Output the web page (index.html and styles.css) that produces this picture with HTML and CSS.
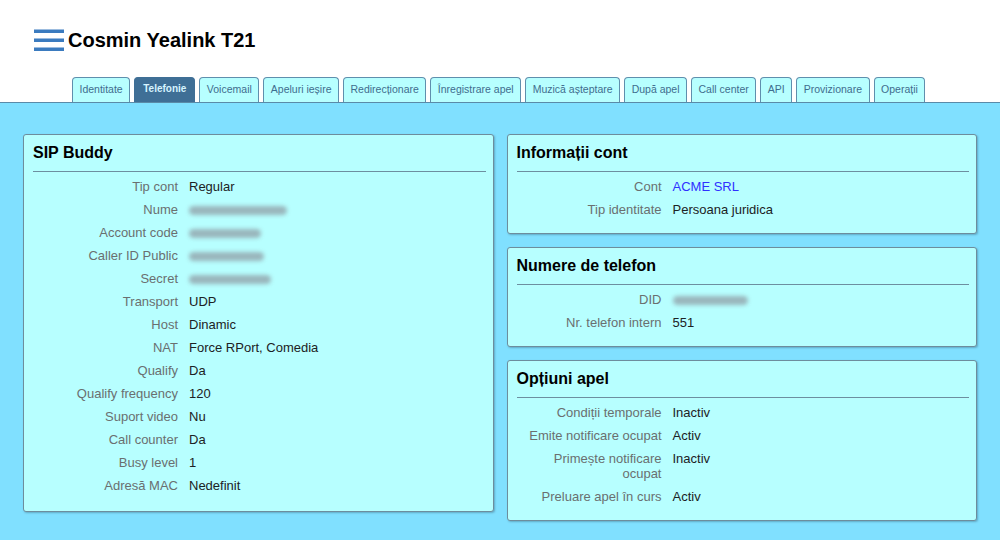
FILE: index.html
```html
<!DOCTYPE html>
<html lang="ro">
<head>
<meta charset="utf-8">
<title>Cosmin Yealink T21</title>
<link rel="stylesheet" href="styles.css">
</head>
<body>
<header class="header">
  <div class="title-row">
    <svg class="burger" width="30" height="23" viewBox="0 0 30 23">
      <rect x="0" y="0.5" width="30" height="3.5" fill="#3b7bbf"/>
      <rect x="0" y="9.5" width="30" height="3.5" fill="#3b7bbf"/>
      <rect x="0" y="18.5" width="30" height="3.5" fill="#3b7bbf"/>
    </svg>
    <h1 class="title">Cosmin Yealink T21</h1>
  </div>
  <nav class="tabs">
    <a class="tab">Identitate</a>
    <a class="tab active">Telefonie</a>
    <a class="tab">Voicemail</a>
    <a class="tab">Apeluri ieșire</a>
    <a class="tab">Redirecționare</a>
    <a class="tab">Înregistrare apel</a>
    <a class="tab">Muzică așteptare</a>
    <a class="tab">După apel</a>
    <a class="tab">Call center</a>
    <a class="tab">API</a>
    <a class="tab">Provizionare</a>
    <a class="tab">Operații</a>
  </nav>
</header>
<main class="main">
  <div class="col">
    <section class="panel panel-tall">
      <h2 class="panel-title">SIP Buddy</h2>
      <div class="rows">
        <div class="row"><span class="lbl">Tip cont</span><span class="val">Regular</span></div>
        <div class="row"><span class="lbl">Nume</span><span class="val"><span class="blur w98"></span></span></div>
        <div class="row"><span class="lbl">Account code</span><span class="val"><span class="blur w72"></span></span></div>
        <div class="row"><span class="lbl">Caller ID Public</span><span class="val"><span class="blur w75"></span></span></div>
        <div class="row"><span class="lbl">Secret</span><span class="val"><span class="blur w82"></span></span></div>
        <div class="row"><span class="lbl">Transport</span><span class="val">UDP</span></div>
        <div class="row"><span class="lbl">Host</span><span class="val">Dinamic</span></div>
        <div class="row"><span class="lbl">NAT</span><span class="val">Force RPort, Comedia</span></div>
        <div class="row"><span class="lbl">Qualify</span><span class="val">Da</span></div>
        <div class="row"><span class="lbl">Qualify frequency</span><span class="val">120</span></div>
        <div class="row"><span class="lbl">Suport video</span><span class="val">Nu</span></div>
        <div class="row"><span class="lbl">Call counter</span><span class="val">Da</span></div>
        <div class="row"><span class="lbl">Busy level</span><span class="val">1</span></div>
        <div class="row"><span class="lbl">Adresă MAC</span><span class="val">Nedefinit</span></div>
      </div>
    </section>
  </div>
  <div class="col">
    <section class="panel">
      <h2 class="panel-title">Informații cont</h2>
      <div class="rows">
        <div class="row"><span class="lbl">Cont</span><span class="val"><a class="link">ACME SRL</a></span></div>
        <div class="row"><span class="lbl">Tip identitate</span><span class="val">Persoana juridica</span></div>
      </div>
    </section>
    <section class="panel">
      <h2 class="panel-title">Numere de telefon</h2>
      <div class="rows">
        <div class="row"><span class="lbl">DID</span><span class="val"><span class="blur w75"></span></span></div>
        <div class="row"><span class="lbl">Nr. telefon intern</span><span class="val">551</span></div>
      </div>
    </section>
    <section class="panel">
      <h2 class="panel-title">Opțiuni apel</h2>
      <div class="rows">
        <div class="row"><span class="lbl">Condiții temporale</span><span class="val">Inactiv</span></div>
        <div class="row"><span class="lbl">Emite notificare ocupat</span><span class="val">Activ</span></div>
        <div class="row"><span class="lbl">Primește notificare ocupat</span><span class="val">Inactiv</span></div>
        <div class="row"><span class="lbl">Preluare apel în curs</span><span class="val">Activ</span></div>
      </div>
    </section>
  </div>
</main>
</body>
</html>
```

FILE: styles.css
```css
* { box-sizing: border-box; }
html, body { margin: 0; padding: 0; }
body {
  width: 1000px;
  height: 540px;
  overflow: hidden;
  font-family: "Liberation Sans", Arial, sans-serif;
  background: #80e0ff;
}
.header {
  background: #ffffff;
  height: 102px;
  display: flex;
  flex-direction: column;
}
.title-row {
  display: flex;
  align-items: center;
  padding: 29px 0 0 34px;
  height: 51px;
}
.burger { display: block; margin-right: 4px; }
.title {
  margin: 0;
  font-size: 20px;
  font-weight: bold;
  color: #000;
  line-height: 22px;
}
.tabs {
  margin-top: auto;
  display: flex;
  gap: 4px;
  padding-left: 72px;
}
.tab {
  display: block;
  height: 25px;
  line-height: 22px;
  padding: 0 6.5px;
  font-size: 10.5px;
  color: #3f6d8e;
  background: #b7ffff;
  border: 1px solid #5f8fad;
  border-bottom: none;
  border-radius: 4px 4px 0 0;
}
.tab.active {
  background: #3f6f96;
  color: #d6f4ff;
  border-color: #3f6f96;
  font-weight: bold;
  font-size: 10px;
  padding: 0 8px;
}
.main {
  border-top: 1px solid #5a8aa8;
  display: flex;
  gap: 13px;
  padding: 31px 23px 0 23px;
}
.col {
  flex: 1;
  display: flex;
  flex-direction: column;
  gap: 13px;
}
.panel {
  background: #b7ffff;
  border: 1px solid #6d8d9d;
  border-radius: 3px;
  box-shadow: 1px 1px 2px rgba(40, 70, 90, 0.35);
  padding: 8px 7px 12px 9px;
}
.panel-tall { height: 378px; }
.panel-title {
  margin: 0;
  font-size: 16px;
  font-weight: bold;
  line-height: 20px;
  color: #000;
  padding-bottom: 8px;
  border-bottom: 1px solid #6d8fa0;
  margin-bottom: 3px;
}
.row {
  display: flex;
  font-size: 13px;
  line-height: 15px;
  padding: 4px 0;
}
.lbl {
  width: 145px;
  flex: none;
  text-align: right;
  color: #6a6f70;
}
.val {
  margin-left: 11px;
  color: #1c2224;
}
.link { color: #3030ff; text-decoration: none; }
.blur {
  display: inline-block;
  height: 9px;
  vertical-align: middle;
  background: #94a9b0;
  border-radius: 5px;
  filter: blur(2px);
  opacity: 0.85;
}
.w98 { width: 98px; }
.w72 { width: 72px; }
.w75 { width: 75px; }
.w82 { width: 82px; }
```
